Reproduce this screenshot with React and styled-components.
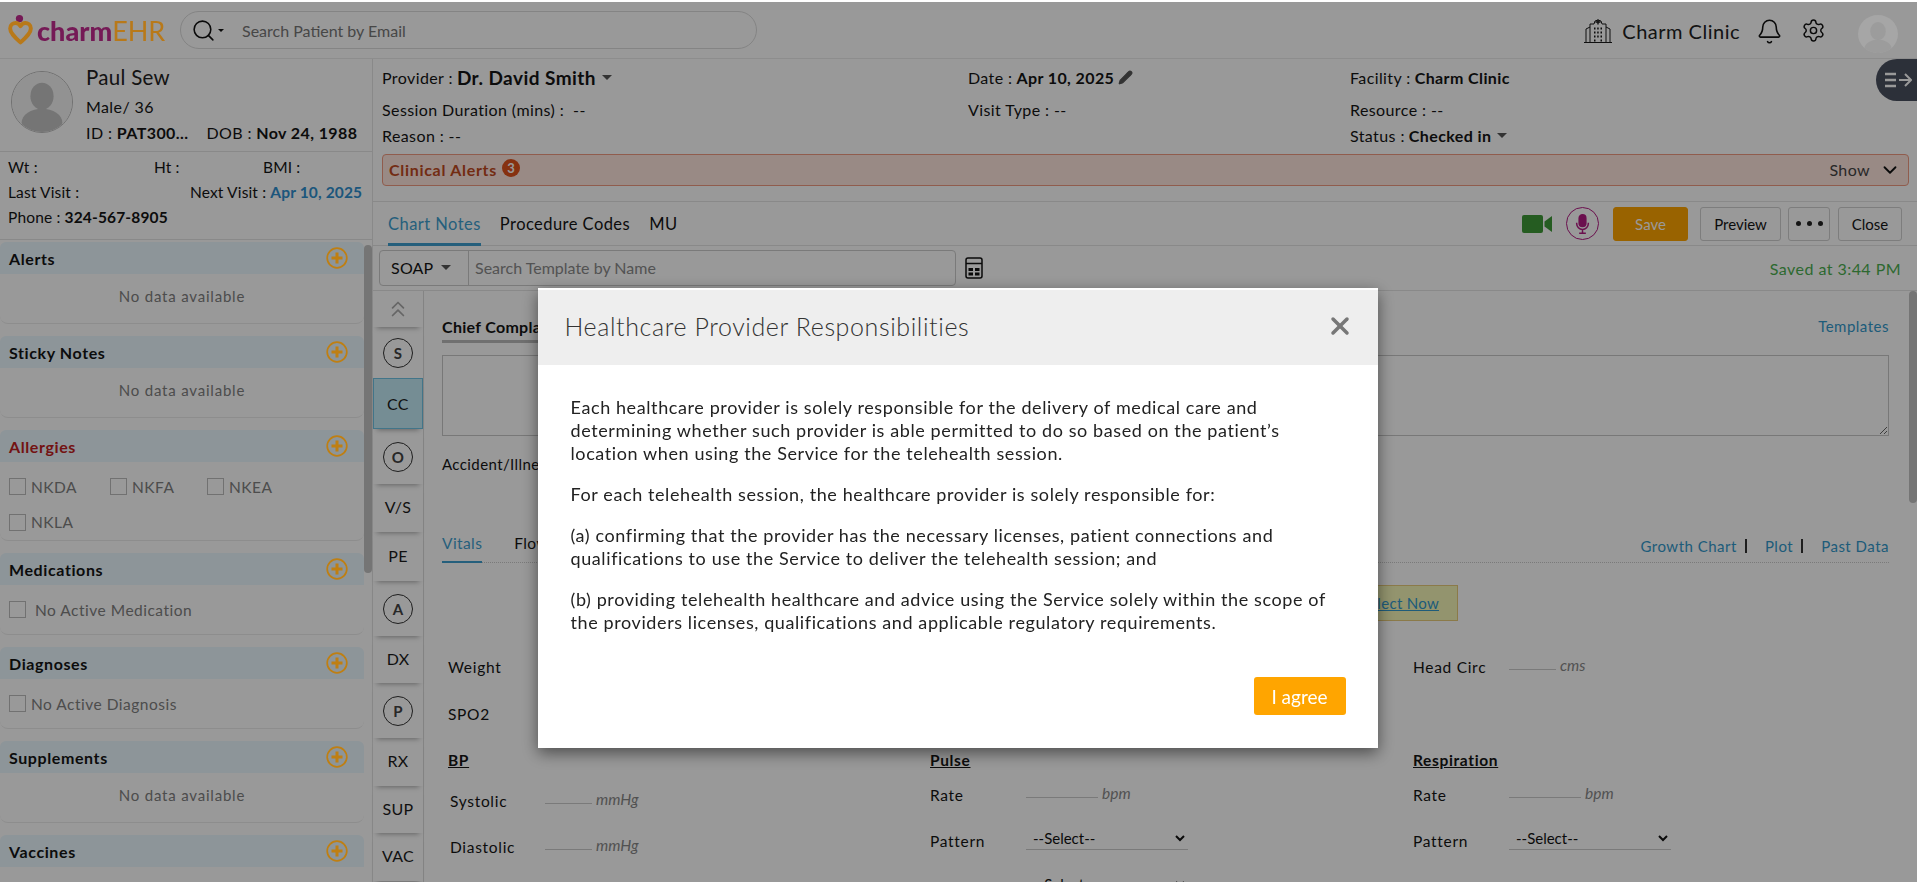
import React from 'react';
import styled, { createGlobalStyle, css } from 'styled-components';
import { Bell, ChevronDown, ChevronsUp, Pencil, Search, Settings, X } from 'lucide-react';

const GlobalStyle = createGlobalStyle`
  html, body { margin: 0; padding: 0; height: 100%; overflow: hidden; background: #fff; }
  body { font-family: Lato, "Liberation Sans", sans-serif; font-size: 16px; color: #141414; }
  * { box-sizing: border-box; }
`;

// these sit above the backdrop in the reference, they stay bright
const raised = css`
  position: relative;
  z-index: 11;
`;

const Page = styled.div`
  width: 100vw;
  height: 100vh;
  display: flex;
  flex-direction: column;
  overflow: hidden;
`;

const Header = styled.header`
  height: 59px;
  flex: none;
  display: flex;
  align-items: center;
  padding: 2px 19px 0 8px;
  border-bottom: 1px solid #ececec;
`;

const LogoWrap = styled.div`
  ${raised}
  width: 172px;
  flex: none;
  display: flex;
  align-items: center;
  gap: 4px;
  font-size: 27px;
  line-height: 1;
`;

const LogoCharm = styled.span`
  font-weight: 900;
  color: #751a56;
`;

const LogoEhr = styled.span`
  color: #b8791a;
  font-weight: 400;
`;

const SearchPill = styled.div`
  width: 577px;
  height: 38px;
  display: flex;
  align-items: center;
  border: 1px solid #dcdcdc;
  border-radius: 19px;
  padding-left: 10px;
  color: #777;
  font-size: 16px;
`;

const SearchGlyph = styled.div`
  width: 51px;
  display: flex;
  align-items: center;
  color: #111;
`;

const Caret = styled.span`
  display: inline-block;
  width: 0;
  height: 0;
  margin-left: ${p => p.$gap || 2}px;
  border-left: ${p => p.$size || 6}px solid transparent;
  border-right: ${p => p.$size || 6}px solid transparent;
  border-top: ${p => p.$size || 6}px solid ${p => p.$color || '#555'};
`;

const HeaderRight = styled.div`
  margin-left: auto;
  display: flex;
  align-items: center;
`;

const ClinicName = styled.span`
  font-size: 20px;
  letter-spacing: 0.5px;
  margin: 2px 16px 0 9px;
  color: #222;
`;

const BellWrap = styled.span`
  display: flex;
  margin-top: 2px;
`;

const GearWrap = styled.span`
  display: flex;
  margin-left: 18px;
`;

const HeaderAvatar = styled.div`
  ${raised}
  width: 40px;
  height: 38px;
  margin: 8px 0 0 32px;
  align-self: flex-start;
  overflow: hidden;
  border-radius: 50%;
`;

const DrawerToggle = styled.div`
  position: absolute;
  top: 59px;
  right: 0;
  width: 41px;
  height: 42px;
  background: #4a5060;
  border-radius: 21px 0 0 21px;
  display: flex;
  align-items: center;
  justify-content: center;
  padding-left: 3px;
`;

const Columns = styled.div`
  flex: 1;
  min-height: 0;
  display: flex;
`;

const Sidebar = styled.aside`
  width: 373px;
  flex: none;
  display: flex;
  flex-direction: column;
  border-right: 1px solid #e4e4e4;
`;

const PatientCard = styled.div`
  height: 93px;
  flex: none;
  display: flex;
  border-bottom: 1px solid #e4e4e4;
  padding: 5px 0 0 11px;
`;

const PatientAvatar = styled.div`
  width: 62px;
  height: 62px;
  border: 1px solid #bbb;
  border-radius: 50%;
  margin-top: 7px;
  overflow: hidden;
  flex: none;
`;

const PatientInfo = styled.div`
  margin-left: 13px;
  display: flex;
  flex-direction: column;
`;

const PatientName = styled.div`
  font-size: 20.500px;
  letter-spacing: 0.3px;
  line-height: 26px;
  height: 30px;
  color: #222;
`;

const PatientLine = styled.div`
  font-size: 16px;
  letter-spacing: 0.4px;
  line-height: 26px;
  display: flex;
  gap: 18px;
  white-space: nowrap;
`;

const VitalsCard = styled.div`
  height: 88px;
  flex: none;
  border-bottom: 1px solid #e4e4e4;
  padding: 3px 0 0 8px;
  font-size: 15.500px;
  letter-spacing: 0.15px;
  line-height: 25px;
  white-space: nowrap;
`;

const StatRow = styled.div`
  display: grid;
  grid-template-columns: ${p => p.$cols || '1fr'};
`;

const Blue = styled.b`
  color: #2f8fcf;
`;

const SideScroll = styled.div`
  flex: 1;
  min-height: 0;
  display: flex;
  padding-top: 2px;
`;

const SectionList = styled.div`
  width: 364px;
  flex: none;
`;

const ScrollThumb = styled.div`
  width: ${p => p.$w || 9}px;
  height: ${p => p.$h}px;
  margin-top: ${p => p.$mt || 0}px;
  background: #c4c4c4;
  border-radius: 5px;
`;

const Section = styled.section`
  margin-bottom: 12px;
  border-bottom: 1px solid #ececec;
  border-radius: 0 0 8px 8px;
`;

const SectionHead = styled.div`
  height: 32px;
  display: flex;
  align-items: center;
  justify-content: space-between;
  padding: 0 16px 0 9px;
  background: #ebf8ff;
  font-weight: 700;
  font-size: 16px;
  letter-spacing: 0.6px;
  border-radius: 6px 6px 0 0;
  color: ${p => (p.$alert ? '#c02020' : '#141414')};
`;

const PlusWrap = styled.span`
  ${raised}
  display: flex;
`;

const SectionBody = styled.div`
  min-height: ${p => p.$h || 49}px;
  padding: ${p => p.$pad || '0 9px'};
  display: flex;
  flex-wrap: wrap;
  align-items: center;
  color: #808080;
  letter-spacing: 0.5px;
`;

const EmptyNote = styled.div`
  width: 100%;
  text-align: center;
  font-size: 15px;
  letter-spacing: 0.8px;
  padding-bottom: 5px;
`;

const Check = styled.label`
  display: flex;
  align-items: center;
  width: ${p => p.$w || 'auto'};
  gap: ${p => p.$gap || 5}px;
  height: 33px;
  font-size: 15.500px;
`;

const Box = styled.span`
  width: 17px;
  height: 17px;
  flex: none;
  border: 1px solid #bcbcbc;
  background: #fff;
`;

const Main = styled.main`
  flex: 1;
  min-width: 0;
  display: flex;
  flex-direction: column;
`;

const InfoGrid = styled.div`
  flex: none;
  height: 95px;
  padding-left: 9px;
  display: grid;
  grid-template-columns: 586px 382px 1fr;
  grid-template-rows: 37px 26px 27px;
  align-items: center;
  font-size: 16px;
`;

const InfoCell = styled.div`
  display: flex;
  align-items: center;
  gap: 4px;
  letter-spacing: 0.4px;
`;

const ProviderName = styled.b`
  font-size: 19px;
  letter-spacing: 0.45px;
`;

const AlertBar = styled.div`
  flex: none;
  height: 32px;
  margin: 0 8px 15px 9px;
  display: flex;
  align-items: center;
  padding: 0 7px 1px 6px;
  background: #ffe6de;
  border: 1px solid #f09a80;
  border-radius: 4px;
  font-size: 16px;
`;

const AlertTitle = styled.b`
  color: #c04a1e;
  letter-spacing: 0.7px;
`;

const AlertCount = styled.span`
  width: 18px;
  height: 18px;
  margin-left: 5px;
  margin-top: -3px;
  border-radius: 50%;
  background: #e0521c;
  color: #fff;
  font-size: 13px;
  font-weight: 700;
  display: flex;
  align-items: center;
  justify-content: center;
`;

const AlertShow = styled.span`
  margin-left: auto;
  display: flex;
  align-items: center;
  gap: 9px;
  color: #444;
  letter-spacing: 0.4px;
`;

const TabBar = styled.div`
  flex: none;
  height: 45px;
  display: flex;
  align-items: stretch;
  border-top: 1px solid #e4e4e4;
  border-bottom: 1px solid #e4e4e4;
  padding: 0 15px 0 15px;
`;

const Tab = styled.div`
  display: flex;
  align-items: center;
  margin-right: ${p => p.$gap || 19}px;
  font-size: 16.500px;
  letter-spacing: 0.45px;
  height: 44px;
  color: ${p => (p.$active ? '#3f9fcf' : '#141414')};
  border-bottom: 3px solid ${p => (p.$active ? '#3f9fcf' : 'transparent')};
  padding-top: 2px;
`;

const Actions = styled.div`
  margin-left: auto;
  display: flex;
  align-items: center;
`;

const MicRing = styled.span`
  width: 33px;
  height: 33px;
  border-radius: 50%;
  border: 1px solid #b21a82;
  display: flex;
  align-items: center;
  justify-content: center;
  margin: 0 13px 0 14px;
`;

const ActionButton = styled.button`
  height: 34px;
  width: ${p => p.$w}px;
  margin-left: ${p => p.$ml || 7}px;
  font: inherit;
  font-size: 15px;
  background: ${p => (p.$primary ? '#ffa500' : 'transparent')};
  color: ${p => (p.$primary ? '#fff' : '#141414')};
  border: 1px solid ${p => (p.$primary ? '#ffa500' : '#d0d0d0')};
  border-radius: 3px;
  padding: 0;
  display: flex;
  align-items: center;
  justify-content: center;
  gap: 3px;
`;

const Dot = styled.i`
  width: 5px;
  height: 5px;
  margin: 0 1.500px;
  border-radius: 50%;
  background: #222;
`;

const TemplateBar = styled.div`
  flex: none;
  height: 45px;
  display: flex;
  align-items: center;
  padding: 0 16px 0 6px;
  border-bottom: 1px solid #e4e4e4;
`;

const TemplatePicker = styled.div`
  width: 577px;
  height: 36px;
  display: flex;
  border: 1px solid #ccc;
  border-radius: 4px;
  align-items: stretch;
  margin-bottom: 1px;
`;

const TemplateType = styled.div`
  width: 89px;
  display: flex;
  align-items: center;
  padding-left: 11px;
  gap: 6px;
  border-right: 1px solid #ccc;
  font-size: 16px;
  letter-spacing: 0.2px;
`;

const TemplateSearch = styled.div`
  display: flex;
  align-items: center;
  padding-left: 6px;
  color: #8a8a8a;
  font-size: 16px;
`;

const CalcWrap = styled.span`
  margin-left: 9px;
  display: flex;
`;

const SavedAt = styled.span`
  margin-left: auto;
  color: #4caf50;
  font-size: 16px;
  letter-spacing: 0.45px;
`;

const Workspace = styled.div`
  flex: 1;
  min-height: 0;
  display: flex;
`;

const SectionNav = styled.nav`
  width: 51px;
  flex: none;
  border-right: 1px solid #ddd;
  display: flex;
  flex-direction: column;
`;

const NavItem = styled.div`
  flex: none;
  height: ${p => p.$h}px;
  display: flex;
  align-items: center;
  justify-content: center;
  padding-bottom: ${p => (p.$flat ? 3 : 0)}px;
  font-size: 16px;
  letter-spacing: 0.3px;
  color: ${p => (p.$muted ? '#aaa' : '#1c1c1c')};
  background: ${p => (p.$active ? '#c4ecf7' : 'transparent')};
  border: ${p => (p.$active ? '1px solid #6fc4e4' : 'none')};
  box-shadow: 0 5px 5px -4px rgba(0, 0, 0, 0.35);
`;

const NavCircle = styled.span`
  width: 30px;
  height: 30px;
  border: 1px solid #333;
  border-radius: 50%;
  display: flex;
  align-items: center;
  justify-content: center;
  font-weight: 700;
  font-size: 15px;
  color: #444;
`;

const Sheet = styled.div`
  flex: 1;
  min-width: 0;
  padding: 26px 20px 0 18px;
`;

const SheetHeadRow = styled.div`
  display: flex;
  justify-content: space-between;
  align-items: flex-start;
  height: 26px;
`;

const ChiefTitle = styled.div`
  width: 120px;
  height: 26px;
  font-weight: 700;
  font-size: 16px;
  letter-spacing: 0.3px;
  border-bottom: 3px solid #bbb;
  white-space: nowrap;
  overflow: hidden;
`;

const SheetLink = styled.span`
  color: #3399cc;
  font-size: 15px;
  letter-spacing: 0.5px;
`;

const ComplaintBox = styled.textarea`
  display: block;
  width: 100%;
  height: 81px;
  margin-top: 12px;
  border: 1px solid #c8c8c8;
  background: transparent;
  outline: none;
  resize: vertical;
`;

const AccidentRow = styled.div`
  margin-top: 18px;
  font-size: 15px;
  letter-spacing: 0.4px;
  line-height: 20px;
`;

const VitalsTabs = styled.div`
  margin-top: 55px;
  height: 34px;
  display: flex;
  align-items: flex-start;
  border-bottom: 1px dotted #ccc;
`;

const VitalsTab = styled.div`
  height: 34px;
  line-height: 28px;
  font-size: 15.500px;
  letter-spacing: 0.4px;
  margin-right: ${p => p.$gap || 0}px;
  color: ${p => (p.$active ? '#3f9fcf' : '#141414')};
  border-bottom: ${p => (p.$active ? '2px solid #3f9fcf' : 'none')};
`;

const VitalsLinks = styled.div`
  margin-left: auto;
  display: flex;
  align-items: center;
  height: 34px;
`;

const Pipe = styled.span`
  width: 2px;
  height: 14px;
  background: #333;
  margin: 0 ${p => p.$r}px 0 8px;
`;

const NoticeRow = styled.div`
  margin-top: 22px;
  height: 36px;
  display: flex;
  justify-content: flex-end;
  padding-right: 431px;
`;

const Notice = styled.div`
  width: 400px;
  background: #f5f7b8;
  border: 1px solid #e8cc7a;
  display: flex;
  align-items: center;
  justify-content: flex-end;
  padding-right: 18px;
`;

const NoticeLink = styled.a`
  color: #3399cc;
  font-size: 15px;
  text-decoration: underline;
  letter-spacing: 0.3px;
`;

const VitalGrid = styled.div`
  display: grid;
  grid-template-columns: 482px 483px 1fr;
  padding-left: 6px;
  margin-top: ${p => p.$mt || 0}px;
`;

const VitalCol = styled.div`
  padding-left: ${p => p.$pl || 0}px;
  padding-top: ${p => p.$pt || 0}px;
`;

const GroupTitle = styled.div`
  height: ${p => p.$h || 23}px;
  line-height: 22px;
  font-weight: 700;
  font-size: 15.500px;
  letter-spacing: 0.65px;
  text-decoration: underline;
`;

const Field = styled.div`
  height: ${p => p.$h || 46}px;
  display: flex;
  align-items: center;
`;

const FieldLabel = styled.span`
  width: ${p => p.$w || 96}px;
  flex: none;
  letter-spacing: 0.7px;
  font-size: 15.500px;
`;

const LineInput = styled.input`
  width: ${p => p.$w}px;
  height: 6px;
  border: none;
  border-bottom: 1px solid #ccc;
  background: transparent;
  outline: none;
  padding: 0;
`;

const Unit = styled.span`
  margin: -4px 0 0 4px;
  font-style: italic;
  font-size: 15.500px;
  color: #888;
`;

const LineSelect = styled.select`
  width: 162px;
  height: 24px;
  margin-top: -6px;
  border: none;
  border-bottom: 1px solid #ccc;
  background: transparent;
  font-family: Lato, sans-serif;
  font-size: 15px;
  color: #111;
  padding-left: 3px;
  outline: none;
`;

const PageScroll = styled.div`
  width: 8px;
  flex: none;
`;

const Backdrop = styled.div`
  position: fixed;
  inset: 2px 0 0 0;
  z-index: 10;
  background: rgba(0, 0, 0, 0.4);
  display: flex;
  justify-content: center;
  align-items: flex-start;
  padding: 286px 2px 0 0;
`;

const Modal = styled.div`
  width: 840px;
  height: 460px;
  padding-top: 2px;
  background: #fff;
  box-shadow: 0 5px 15px rgba(0, 0, 0, 0.5);
  display: flex;
  flex-direction: column;
`;

const ModalHeader = styled.div`
  height: 75px;
  flex: none;
  background: #eee;
  display: flex;
  align-items: center;
  justify-content: space-between;
  padding: 0 24px 4px 27px;
`;

const ModalTitle = styled.h4`
  margin: 0;
  font-size: 25px;
  font-weight: 300;
  letter-spacing: 0.6px;
  color: #333;
`;

const ModalBody = styled.div`
  flex: 1;
  padding: 31px 45px 0 33px;
  font-size: 18px;
  letter-spacing: 0.6px;
  line-height: 23px;
  color: #222;
`;

const Para = styled.p`
  margin: 0 0 18px;
`;

const ModalFooter = styled.div`
  flex: none;
  height: 71px;
  display: flex;
  justify-content: flex-end;
  padding-right: 32px;
`;

const AgreeButton = styled.button`
  width: 92px;
  height: 38px;
  background: #ffa500;
  border: none;
  border-radius: 3px;
  color: #fff;
  font-family: inherit;
  font-size: 19px;
`;

const LogoMark = () => (
  <svg width="25" height="30" viewBox="0 0 24 29">
    <circle cx="11" cy="3.500" r="3.500" fill="#751a56" />
    <path d="M12 26.500 C6 21 2 17.500 2 13 C2 9.400 5 7.800 7.400 7.800 C9.600 7.800 11 9.200 12 10.800 C13 9.200 14.400 7.800 16.600 7.800 C19 7.800 22 9.400 22 13 C22 17.500 18 21 12 26.500 Z" fill="none" stroke="#b8791a" strokeWidth="3.800" strokeLinejoin="round" />
  </svg>
);

const HospitalIcon = () => (
  <svg width="30" height="25" viewBox="0 0 30 25" fill="none" stroke="#1a1a1a" strokeWidth="1">
    <path d="M7 24V6h4M19 6h4v18M3 24V11l4-2M23 9l4 2v13M1 24.500h28" />
    <path d="M11 6a4 4 0 0 1 8 0" />
    <path d="M15 1.500v5M12.500 4h5" strokeWidth="1.400" />
    <path d="M11 10.500h1.500M14.200 10.500h1.500M17.500 10.500h1.500M11 14.500h1.500M14.200 14.500h1.500M17.500 14.500h1.500M11 18.500h1.500M14.200 18.500h1.500M17.500 18.500h1.500M11 22.500h1.500M17.500 22.500h1.500" strokeWidth="1.800" />
  </svg>
);

const PersonAvatar = ({ size, bg, fg }) => (
  <svg width={size} height={size} viewBox="0 0 62 62">
    <rect width="62" height="62" fill={bg} />
    <ellipse cx="31" cy="25" rx="12" ry="14" fill={fg} />
    <ellipse cx="31" cy="52" rx="21" ry="14" fill={fg} />
  </svg>
);

const PlusIcon = () => (
  <PlusWrap>
    <svg width="22" height="22" viewBox="0 0 22 22" fill="none" stroke="#bf7f12">
      <circle cx="11" cy="11" r="9.800" strokeWidth="1.700" />
      <path d="M11 5.500v11M5.500 11h11" strokeWidth="3" />
    </svg>
  </PlusWrap>
);

const CalcIcon = () => (
  <svg width="18" height="22" viewBox="0 0 18 22">
    <rect x="1" y="1" width="16" height="20" rx="2" fill="none" stroke="#111" strokeWidth="1.500" />
    <path d="M1 6.500h16" stroke="#111" strokeWidth="1.500" />
    <rect x="3.500" y="11" width="4.500" height="3" fill="#111" />
    <rect x="10" y="11" width="4.500" height="3" fill="#111" />
    <rect x="3.500" y="15.500" width="4.500" height="3" fill="#111" />
    <rect x="10" y="15.500" width="4.500" height="3" fill="#111" />
  </svg>
);

const DrawerIcon = () => (
  <svg width="27" height="18" viewBox="0 0 27 18" fill="none" stroke="#fff" strokeWidth="2.400">
    <path d="M0 3h11M0 9h11M0 15h11" />
    <path d="M14 9h12M20 3l6 6-6 6" strokeWidth="2" />
  </svg>
);

const VideoIcon = () => (
  <svg width="30" height="18" viewBox="0 0 30 18" fill="#3f9a38">
    <rect x="0" y="0" width="21" height="18" rx="2" />
    <path d="M22.500 6.500 30 1v16l-7.500-5.500z" />
  </svg>
);

const MicIcon = () => (
  <svg width="15" height="20" viewBox="0 0 18 24" fill="none" stroke="#b21a82" strokeWidth="1.800">
    <rect x="5" y="1" width="8" height="14" rx="4" fill="#b21a82" />
    <path d="M2 10.500v1a7 7 0 0 0 14 0v-1M9 18.500V23M5 23h8" />
  </svg>
);

const sections = [
  { title: 'Alerts' },
  { title: 'Sticky Notes' },
];

const navItems = [
  { label: 'S', h: 51, circle: true },
  { label: 'CC', h: 51, active: true },
  { label: 'O', h: 55, circle: true },
  { label: 'V/S', h: 48 },
  { label: 'PE', h: 49 },
  { label: 'A', h: 55, circle: true },
  { label: 'DX', h: 47 },
  { label: 'P', h: 55, circle: true },
  { label: 'RX', h: 48 },
  { label: 'SUP', h: 47 },
  { label: 'VAC', h: 48 },
];

function App() {
  return (
    <Page>
      <GlobalStyle />
      <Header>
        <LogoWrap>
          <LogoMark />
          <span><LogoCharm>charm</LogoCharm><LogoEhr>EHR</LogoEhr></span>
        </LogoWrap>
        <SearchPill>
          <SearchGlyph>
            <Search size={25} strokeWidth={1.5} />
            <Caret $size={3} $gap={0} $color="#111" />
          </SearchGlyph>
          Search Patient by Email
        </SearchPill>
        <HeaderRight>
          <HospitalIcon />
          <ClinicName>Charm Clinic</ClinicName>
          <BellWrap><Bell size={27} strokeWidth={1.4} color="#111" /></BellWrap>
          <GearWrap><Settings size={25} strokeWidth={1.4} color="#111" /></GearWrap>
          <HeaderAvatar>
            <PersonAvatar size={40} bg="#a6a6a6" fg="#9c9c9c" />
          </HeaderAvatar>
        </HeaderRight>
      </Header>
      <DrawerToggle><DrawerIcon /></DrawerToggle>

      <Columns>
        <Sidebar>
          <PatientCard>
            <PatientAvatar><PersonAvatar size={60} bg="#f4f4f4" fg="#c4c4c4" /></PatientAvatar>
            <PatientInfo>
              <PatientName>Paul Sew</PatientName>
              <PatientLine>Male/ 36</PatientLine>
              <PatientLine>
                <span>ID : <b>PAT300...</b></span>
                <span>DOB : <b>Nov 24, 1988</b></span>
              </PatientLine>
            </PatientInfo>
          </PatientCard>
          <VitalsCard>
            <StatRow $cols="146px 109px 1fr">
              <span>Wt :</span><span>Ht :</span><span>BMI :</span>
            </StatRow>
            <StatRow $cols="182px 1fr">
              <span>Last Visit :</span><span>Next Visit : <Blue>Apr 10, 2025</Blue></span>
            </StatRow>
            <div>Phone : <b>324-567-8905</b></div>
          </VitalsCard>
          <SideScroll>
            <SectionList>
              {sections.map(s => (
                <Section key={s.title}>
                  <SectionHead>{s.title}<PlusIcon /></SectionHead>
                  <SectionBody><EmptyNote>No data available</EmptyNote></SectionBody>
                </Section>
              ))}
              <Section>
                <SectionHead $alert>Allergies<PlusIcon /></SectionHead>
                <SectionBody $h={78} $pad="7px 9px 0">
                  <Check $w="101px"><Box />NKDA</Check>
                  <Check $w="97px"><Box />NKFA</Check>
                  <Check $w="120px"><Box />NKEA</Check>
                  <Check $w="120px"><Box />NKLA</Check>
                </SectionBody>
              </Section>
              <Section>
                <SectionHead>Medications<PlusIcon /></SectionHead>
                <SectionBody><Check $gap={9}><Box />No Active Medication</Check></SectionBody>
              </Section>
              <Section>
                <SectionHead>Diagnoses<PlusIcon /></SectionHead>
                <SectionBody><Check><Box />No Active Diagnosis</Check></SectionBody>
              </Section>
              <Section>
                <SectionHead>Supplements<PlusIcon /></SectionHead>
                <SectionBody><EmptyNote>No data available</EmptyNote></SectionBody>
              </Section>
              <Section>
                <SectionHead>Vaccines<PlusIcon /></SectionHead>
                <SectionBody><EmptyNote>No data available</EmptyNote></SectionBody>
              </Section>
            </SectionList>
            <ScrollThumb $h={328} $mt={3} />
          </SideScroll>
        </Sidebar>

        <Main>
          <InfoGrid>
            <InfoCell>Provider : <ProviderName>Dr. David Smith</ProviderName><Caret $gap={0} $size={5} /></InfoCell>
            <InfoCell>Date : <b>Apr 10, 2025</b><Pencil size={15} color="#555" fill="#555" /></InfoCell>
            <InfoCell>Facility : <b>Charm Clinic</b></InfoCell>
            <InfoCell>Session Duration (mins) :&nbsp; --</InfoCell>
            <InfoCell>Visit Type : --</InfoCell>
            <InfoCell>Resource : --</InfoCell>
            <InfoCell>Reason : --</InfoCell>
            <span />
            <InfoCell>Status : <b>Checked in</b><Caret $gap={0} $size={5} /></InfoCell>
          </InfoGrid>
          <AlertBar>
            <AlertTitle>Clinical Alerts</AlertTitle>
            <AlertCount>3</AlertCount>
            <AlertShow>Show <ChevronDown size={22} color="#111" /></AlertShow>
          </AlertBar>
          <TabBar>
            <Tab $active>Chart Notes</Tab>
            <Tab>Procedure Codes</Tab>
            <Tab>MU</Tab>
            <Actions>
              <VideoIcon />
              <MicRing><MicIcon /></MicRing>
              <ActionButton $primary $w={75} $ml={1}>Save</ActionButton>
              <ActionButton $w={81} $ml={12}>Preview</ActionButton>
              <ActionButton $w={42}><Dot /><Dot /><Dot /></ActionButton>
              <ActionButton $w={64} $ml={8}>Close</ActionButton>
            </Actions>
          </TabBar>
          <TemplateBar>
            <TemplatePicker>
              <TemplateType>SOAP <Caret $size={5} /></TemplateType>
              <TemplateSearch>Search Template by Name</TemplateSearch>
            </TemplatePicker>
            <CalcWrap><CalcIcon /></CalcWrap>
            <SavedAt>Saved at 3:44 PM</SavedAt>
          </TemplateBar>
          <Workspace>
            <SectionNav>
              <NavItem $h={36} $muted><ChevronsUp size={26} strokeWidth={1.6} /></NavItem>
              {navItems.map(n => (
                <NavItem key={n.label} $h={n.h} $active={n.active} $flat={!n.circle && !n.active}>
                  {n.circle ? <NavCircle>{n.label}</NavCircle> : n.label}
                </NavItem>
              ))}
            </SectionNav>
            <Sheet>
              <SheetHeadRow>
                <ChiefTitle>Chief Complaint</ChiefTitle>
                <SheetLink>Templates</SheetLink>
              </SheetHeadRow>
              <ComplaintBox readOnly />
              <AccidentRow>Accident/Illness</AccidentRow>
              <VitalsTabs>
                <VitalsTab $active $gap={32}>Vitals</VitalsTab>
                <VitalsTab>Flowsheet</VitalsTab>
                <VitalsLinks>
                  <SheetLink>Growth Chart</SheetLink>
                  <Pipe $r={18} />
                  <SheetLink>Plot</SheetLink>
                  <Pipe $r={18} />
                  <SheetLink>Past Data</SheetLink>
                </VitalsLinks>
              </VitalsTabs>
              <NoticeRow>
                <Notice><NoticeLink>Select Now</NoticeLink></Notice>
              </NoticeRow>
              <VitalGrid $mt={22}>
                <VitalCol>
                  <Field $h={47}><FieldLabel>Weight</FieldLabel></Field>
                  <Field $h={47}><FieldLabel>SPO2</FieldLabel></Field>
                </VitalCol>
                <VitalCol />
                <VitalCol>
                  <Field $h={47}><FieldLabel>Head Circ</FieldLabel><LineInput $w={47} readOnly /><Unit>cms</Unit></Field>
                </VitalCol>
              </VitalGrid>
              <VitalGrid $mt={12}>
                <VitalCol>
                  <GroupTitle>BP</GroupTitle>
                  <VitalCol $pt={6} $pl={2}>
                    <Field><FieldLabel $w={95}>Systolic</FieldLabel><LineInput $w={47} readOnly /><Unit>mmHg</Unit></Field>
                    <Field><FieldLabel $w={95}>Diastolic</FieldLabel><LineInput $w={47} readOnly /><Unit>mmHg</Unit></Field>
                  </VitalCol>
                </VitalCol>
                <VitalCol>
                  <GroupTitle>Pulse</GroupTitle>
                  <Field><FieldLabel>Rate</FieldLabel><LineInput $w={72} readOnly /><Unit>bpm</Unit></Field>
                  <Field><FieldLabel>Pattern</FieldLabel><LineSelect><option>--Select--</option></LineSelect></Field>
                  <Field><FieldLabel>Volume</FieldLabel><LineSelect><option>--Select--</option></LineSelect></Field>
                </VitalCol>
                <VitalCol>
                  <GroupTitle>Respiration</GroupTitle>
                  <Field><FieldLabel>Rate</FieldLabel><LineInput $w={72} readOnly /><Unit>bpm</Unit></Field>
                  <Field><FieldLabel>Pattern</FieldLabel><LineSelect><option>--Select--</option></LineSelect></Field>
                </VitalCol>
              </VitalGrid>
            </Sheet>
            <PageScroll><ScrollThumb $w={8} $h={212} /></PageScroll>
          </Workspace>
        </Main>
      </Columns>

      <Backdrop>
        <Modal>
          <ModalHeader>
            <ModalTitle>Healthcare Provider Responsibilities</ModalTitle>
            <X size={28} strokeWidth={3} color="#777" />
          </ModalHeader>
          <ModalBody>
            <Para>Each healthcare provider is solely responsible for the delivery of medical care and determining whether such provider is able permitted to do so based on the patient’s location when using the Service for the telehealth session.</Para>
            <Para>For each telehealth session, the healthcare provider is solely responsible for:</Para>
            <Para>(a) confirming that the provider has the necessary licenses, patient connections and qualifications to use the Service to deliver the telehealth session; and</Para>
            <Para>(b) providing telehealth healthcare and advice using the Service solely within the scope of the providers licenses, qualifications and applicable regulatory requirements.</Para>
          </ModalBody>
          <ModalFooter>
            <AgreeButton>I agree</AgreeButton>
          </ModalFooter>
        </Modal>
      </Backdrop>
    </Page>
  );
}

export default App;
